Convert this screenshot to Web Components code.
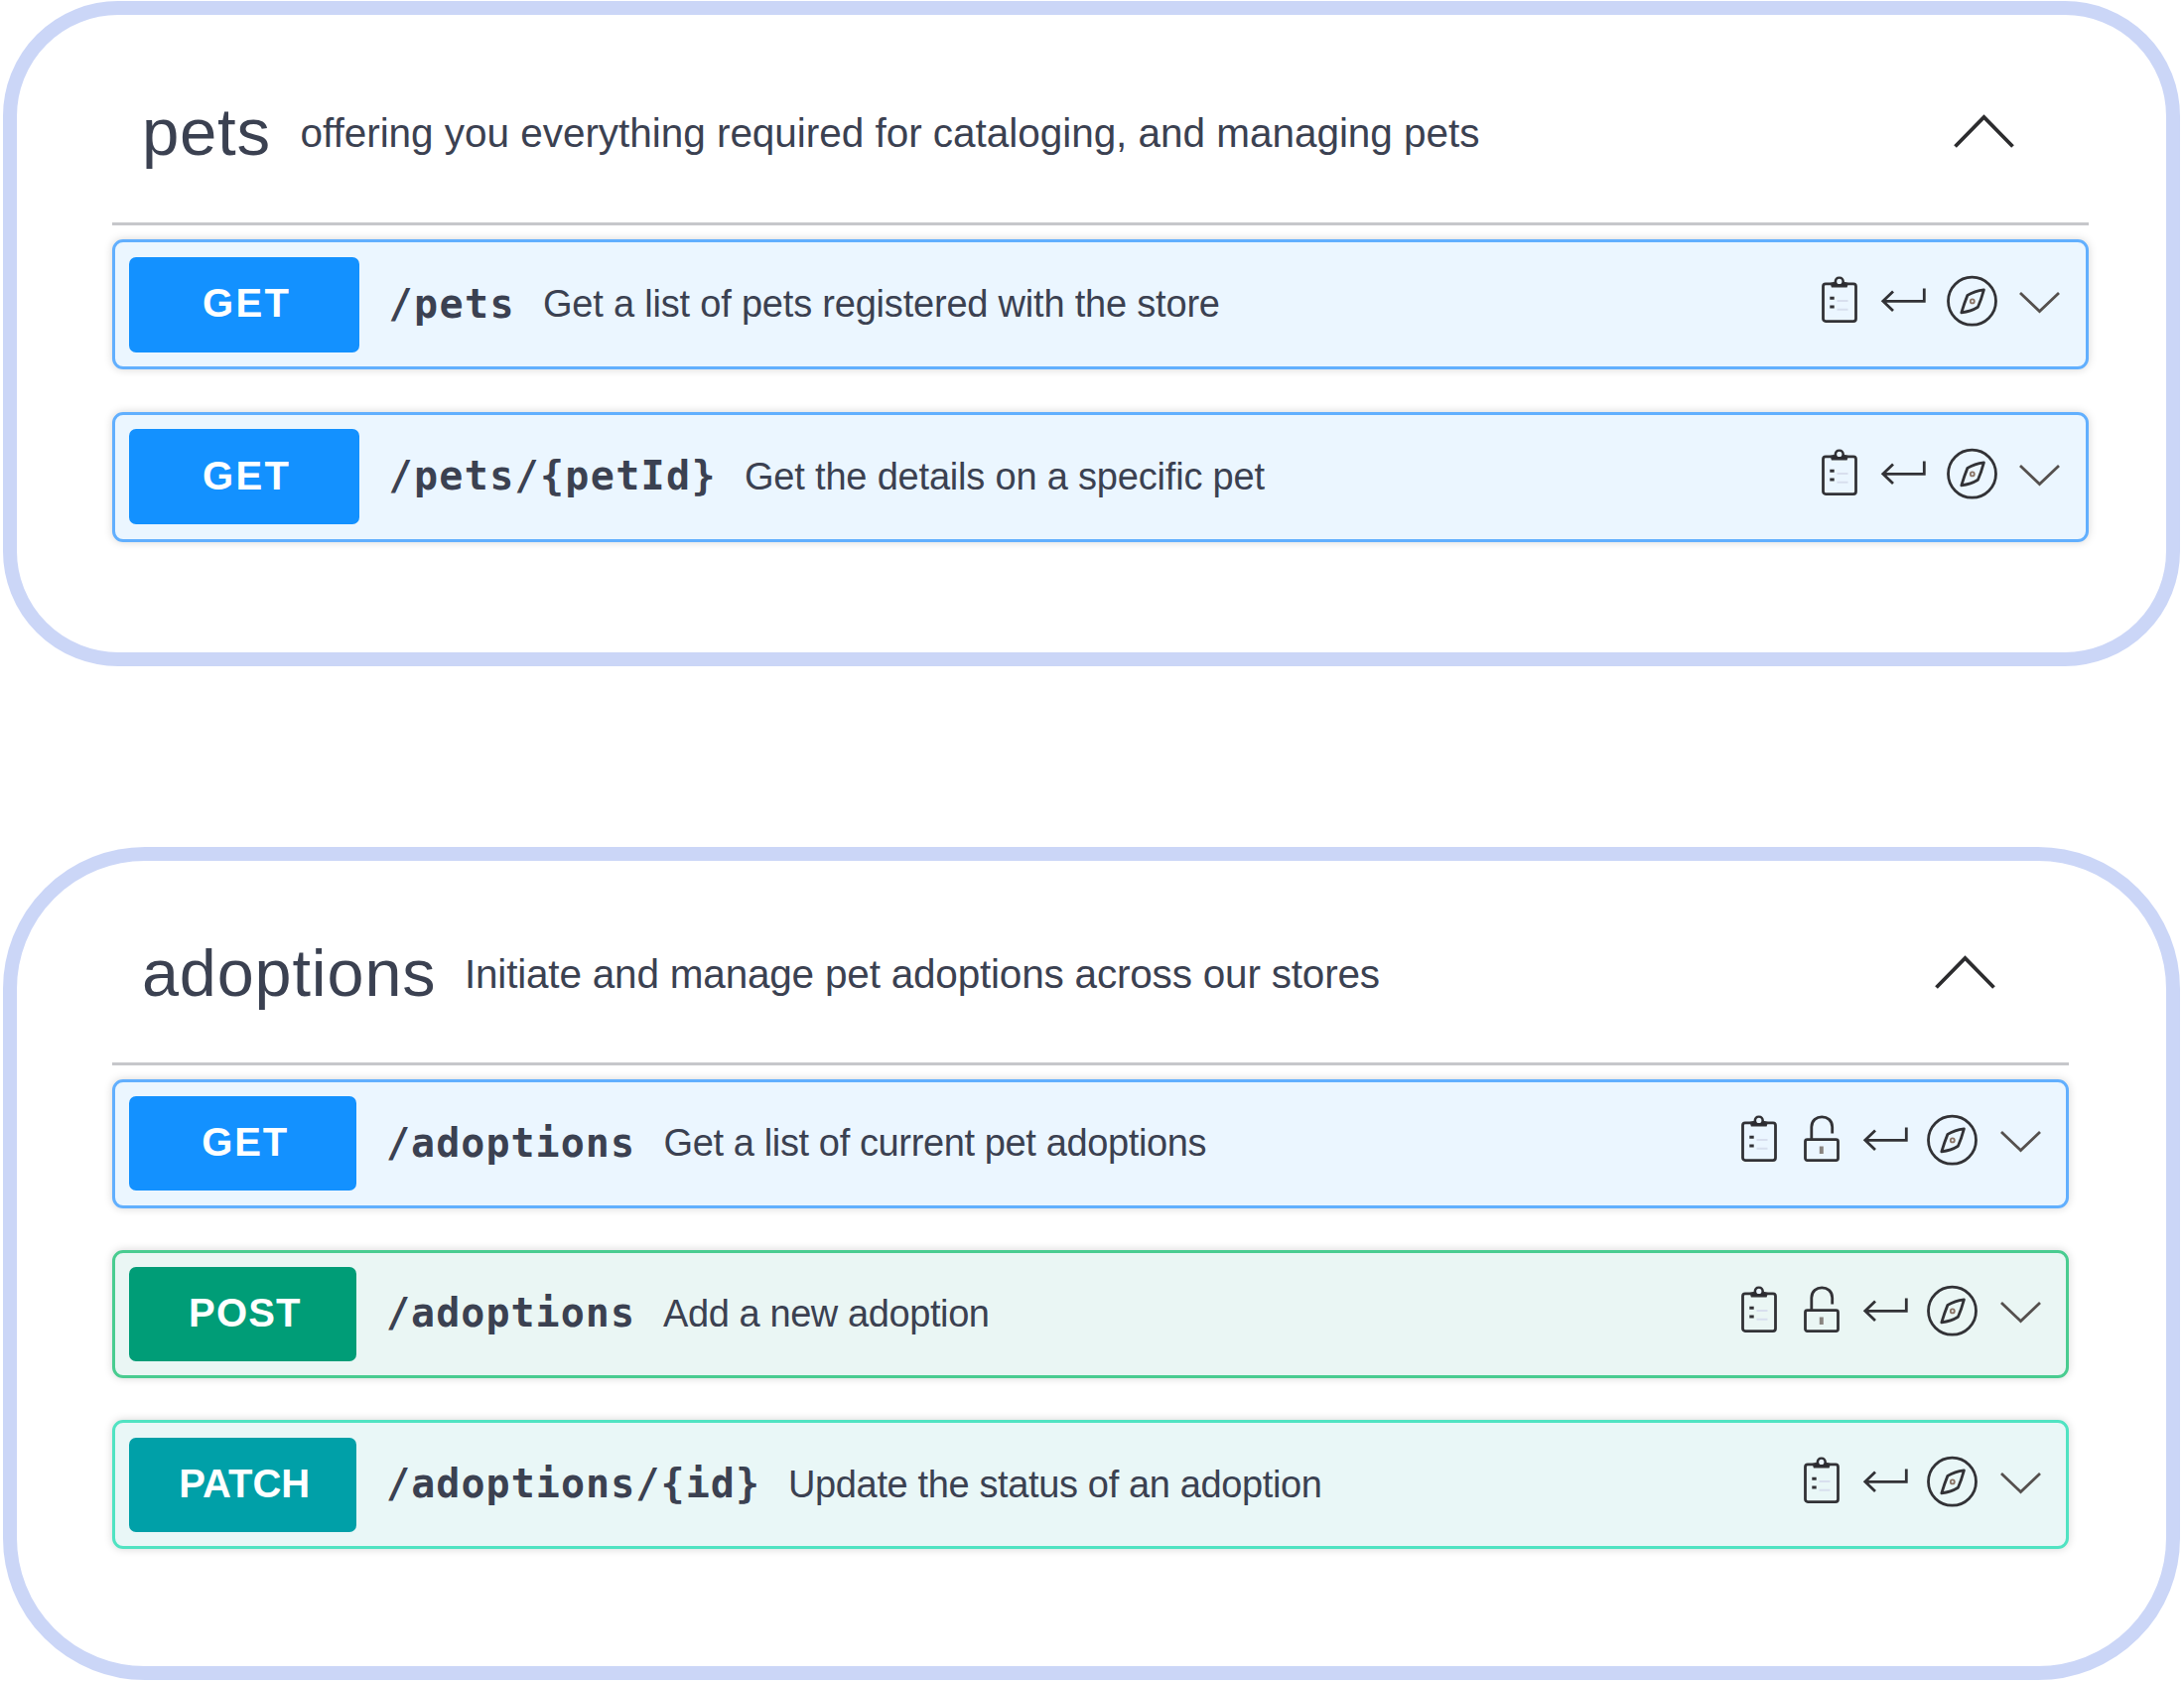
<!DOCTYPE html>
<html lang="en">
<head>
<meta charset="utf-8">
<title>Pet store API</title>
<style>
  html, body { margin: 0; background: #fff; }
  body {
    width: 2200px; height: 1695px; overflow: hidden; box-sizing: border-box;
    padding: 1px 4px 3px 3px; display: flex; flex-direction: column; justify-content: space-between;
    font-family: "Liberation Sans", Arial, sans-serif; color: #3b4151;
  }
</style>
</head>
<body>
<api-section style="--h:670px;--r:116px;--pt:28px;--head:181px;--pr:92px;--gap:42.5px;--row:131px;--btn:232px;--bh:96px;--lead:30px;--tail:26px;--fs:67.2px;--caret:75.5px;--enter:20.5px;--clip:24px"
  name="pets" name-w="129" name-gap="30.5" info="offering you everything required for cataloging, and managing pets" info-w="1188">
  <api-op method="GET" mw="87" path="/pets" pw="126" gap="29.5" info="Get a list of pets registered with the store" iw="682" icons="clip,enter,compass,chev"></api-op>
  <api-op method="GET" mw="87" path="/pets/{petId}" pw="329" gap="29.5" info="Get the details on a specific pet" iw="524" icons="clip,enter,compass,chev"></api-op>
</api-section>
<api-section style="--h:839px;--r:143px;--pt:24px;--head:179px;--pr:112px;--gap:42.2px;--row:129.5px;--btn:229.5px;--bh:95px;--lead:30px;--tail:25.5px;--fs:66.5px;--caret:74px;--enter:19px;--clip:24px"
  name="adoptions" name-w="295.5" name-gap="29.5" info="Initiate and manage pet adoptions across our stores" info-w="922">
  <api-op method="GET" mw="86" path="/adoptions" pw="250" gap="29.5" info="Get a list of current pet adoptions" iw="547" icons="clip,lock,enter,compass,chev"></api-op>
  <api-op method="POST" mw="112.5" path="/adoptions" pw="250" gap="29" info="Add a new adoption" iw="329" icons="clip,lock,enter,compass,chev"></api-op>
  <api-op method="PATCH" mw="132" path="/adoptions/{id}" pw="376" gap="29" info="Update the status of an adoption" iw="538" icons="clip,enter,compass,chev"></api-op>
</api-section>
<script>
/* One line of text tracked so that it fills the given width. */
class FitText extends HTMLElement {
  connectedCallback() {
    if (this.shadowRoot) return;
    this.attachShadow({ mode: 'open' }).innerHTML =
      '<style>:host{display:block;flex:none;white-space:pre}span{display:inline-block;white-space:pre}</style><span><slot></slot></span>';
    const w = +this.getAttribute('w'), span = this.shadowRoot.querySelector('span');
    const n = this.textContent.length;
    span.style.letterSpacing = ((w - span.getBoundingClientRect().width) / (n - 1)) + 'px';
    this.style.width = w + 'px';
  }
}

const ICONS = {
  clip: [36, 'var(--clip)', `<rect x="1.5" y="10.8" width="33" height="37.8" rx="2.5"/>
    <path d="M9.5 10.5 L10.5 13.8 H25 L26 10.5 L22.3 9.5 C21.8 2.6 13.7 2.6 13.2 9.5 Z" fill="#2b2b30" stroke-width="1.6"/>
    <circle cx="17.8" cy="8.4" r="2.6" fill="#eaf4fb" stroke="none"/>
    <path d="M8.3 25.3h4.4M8.3 34h4.4" stroke-width="3"/><path d="M15.5 28h11M15.5 36.7h11" stroke="#d8dfee" stroke-width="2"/>`],
  lock: [36, '24px', `<rect x="1.5" y="27.6" width="33" height="21" rx="2"/>
    <path d="M7.8 27.5V15C7.8 1.4 28.7 1.4 28.7 15V21.5"/><path d="M17.8 34.5v7.5" stroke="#8a8580" stroke-width="4"/>`],
  enter: [45, 'var(--enter)', `<path d="M1.8 28.3H43.3V15.4M12 18.5L1.8 28.3L12 38"/>`],
  compass: [51, '22.5px', `<circle cx="25.5" cy="28.2" r="24"/>
    <path d="M37.4 16.8Q28 18 20.9 22.4Q17.8 30 14.8 39.8Q24.5 38.5 31.4 34.2Q34.6 27 37.4 16.8Z" stroke-linejoin="round"/>
    <circle cx="25.8" cy="28.4" r="2" stroke="#8a7466" stroke-width="1.8"/>`],
  chev: [41, '0px', `<path d="M1 20L20.5 38.5L40 20" stroke="#55504e"/>`]
};

/* Line icons of an operation row; the second value is the space after the icon. */
class OpIcon extends HTMLElement {
  connectedCallback() {
    if (this.shadowRoot) return;
    const [w, gap, art] = ICONS[this.getAttribute('name')];
    this.attachShadow({ mode: 'open' }).innerHTML =
      `<style>:host{display:block;flex:none;margin:0 ${gap} 7px 0}svg{display:block;overflow:visible}</style>
       <svg width="${w}" height="56" viewBox="0 0 ${w} 56" fill="none" stroke="#323236" stroke-width="2.8">${art}</svg>`;
  }
}

const TONES = {
  GET: ['#61affe', '#ebf6ff', '#1391ff'],
  POST: ['#49cc90', '#eaf6f4', '#009d77'],
  PATCH: ['#50e3c2', '#e9f7f7', '#00a0a8']
};

class ApiOp extends HTMLElement {
  connectedCallback() {
    if (this.shadowRoot) return;
    const a = k => this.getAttribute(k), [line, bg, btn] = TONES[a('method')];
    this.attachShadow({ mode: 'open' }).innerHTML = `
      <style>
        :host{display:flex;align-items:center;box-sizing:border-box;height:var(--row);flex:none;
          border:3px solid ${line};border-radius:11px;background:${bg};
          box-shadow:0 0 8px rgba(0,0,0,.17);padding:0 var(--tail) 0 13.5px}
        .method{display:flex;align-items:center;justify-content:center;flex:none;width:var(--btn);height:var(--bh);
          border-radius:7px;background:${btn};color:#fff;font-size:40px;font-weight:700;margin-right:var(--lead)}
        .method fit-text{line-height:44px;margin:0 0 3px 4px}
        .path{font-family:"DejaVu Sans Mono",monospace;font-size:40px;font-weight:700;line-height:46px;margin:0 ${a('gap')}px 2px 0}
        .info{font-size:38px;line-height:44px;padding-bottom:1px}
        .icons{display:flex;align-items:center;margin-left:auto}
        op-icon[name=lock]{margin-left:3.5px}
      </style>
      <div class="method"><fit-text w="${a('mw')}">${a('method')}</fit-text></div>
      <fit-text class="path" w="${a('pw')}">${a('path')}</fit-text>
      <fit-text class="info" w="${a('iw')}">${a('info')}</fit-text>
      <div class="icons">${a('icons').split(',').map(n => `<op-icon name="${n}"></op-icon>`).join('')}</div>`;
  }
}

class ApiSection extends HTMLElement {
  connectedCallback() {
    if (this.shadowRoot) return;
    const a = k => this.getAttribute(k);
    this.attachShadow({ mode: 'open' }).innerHTML = `
      <style>
        :host{display:block;box-sizing:border-box;flex:none;height:var(--h);border:14px solid #cbd6f7;border-radius:var(--r);
          padding:var(--pt) calc(var(--pr) - 14px) 0 96px}
        header{display:flex;align-items:center;height:var(--head);border-bottom:3px solid #c6c7cb;padding:0 var(--caret) 0 30px}
        .name{font-size:var(--fs);line-height:76px;margin:0 ${a('name-gap')}px 1px 0}
        .info{font-size:40.5px;line-height:44px}
        svg{display:block;margin-left:auto;margin-bottom:4px}
        .ops{display:flex;flex-direction:column;gap:var(--gap);margin-top:14px}
      </style>
      <header>
        <fit-text class="name" w="${a('name-w')}">${a('name')}</fit-text>
        <fit-text class="info" w="${a('info-w')}">${a('info')}</fit-text>
        <svg width="61" height="34" viewBox="0 0 61 34" fill="none" stroke="#2c2c2e" stroke-width="3.8"><path d="M1.5 32.5L30.5 3L59.5 32.5"/></svg>
      </header>
      <div class="ops"><slot></slot></div>`;
  }
}
customElements.define('fit-text', FitText);
customElements.define('op-icon', OpIcon);
customElements.define('api-op', ApiOp);
customElements.define('api-section', ApiSection);
</script>
</body>
</html>
